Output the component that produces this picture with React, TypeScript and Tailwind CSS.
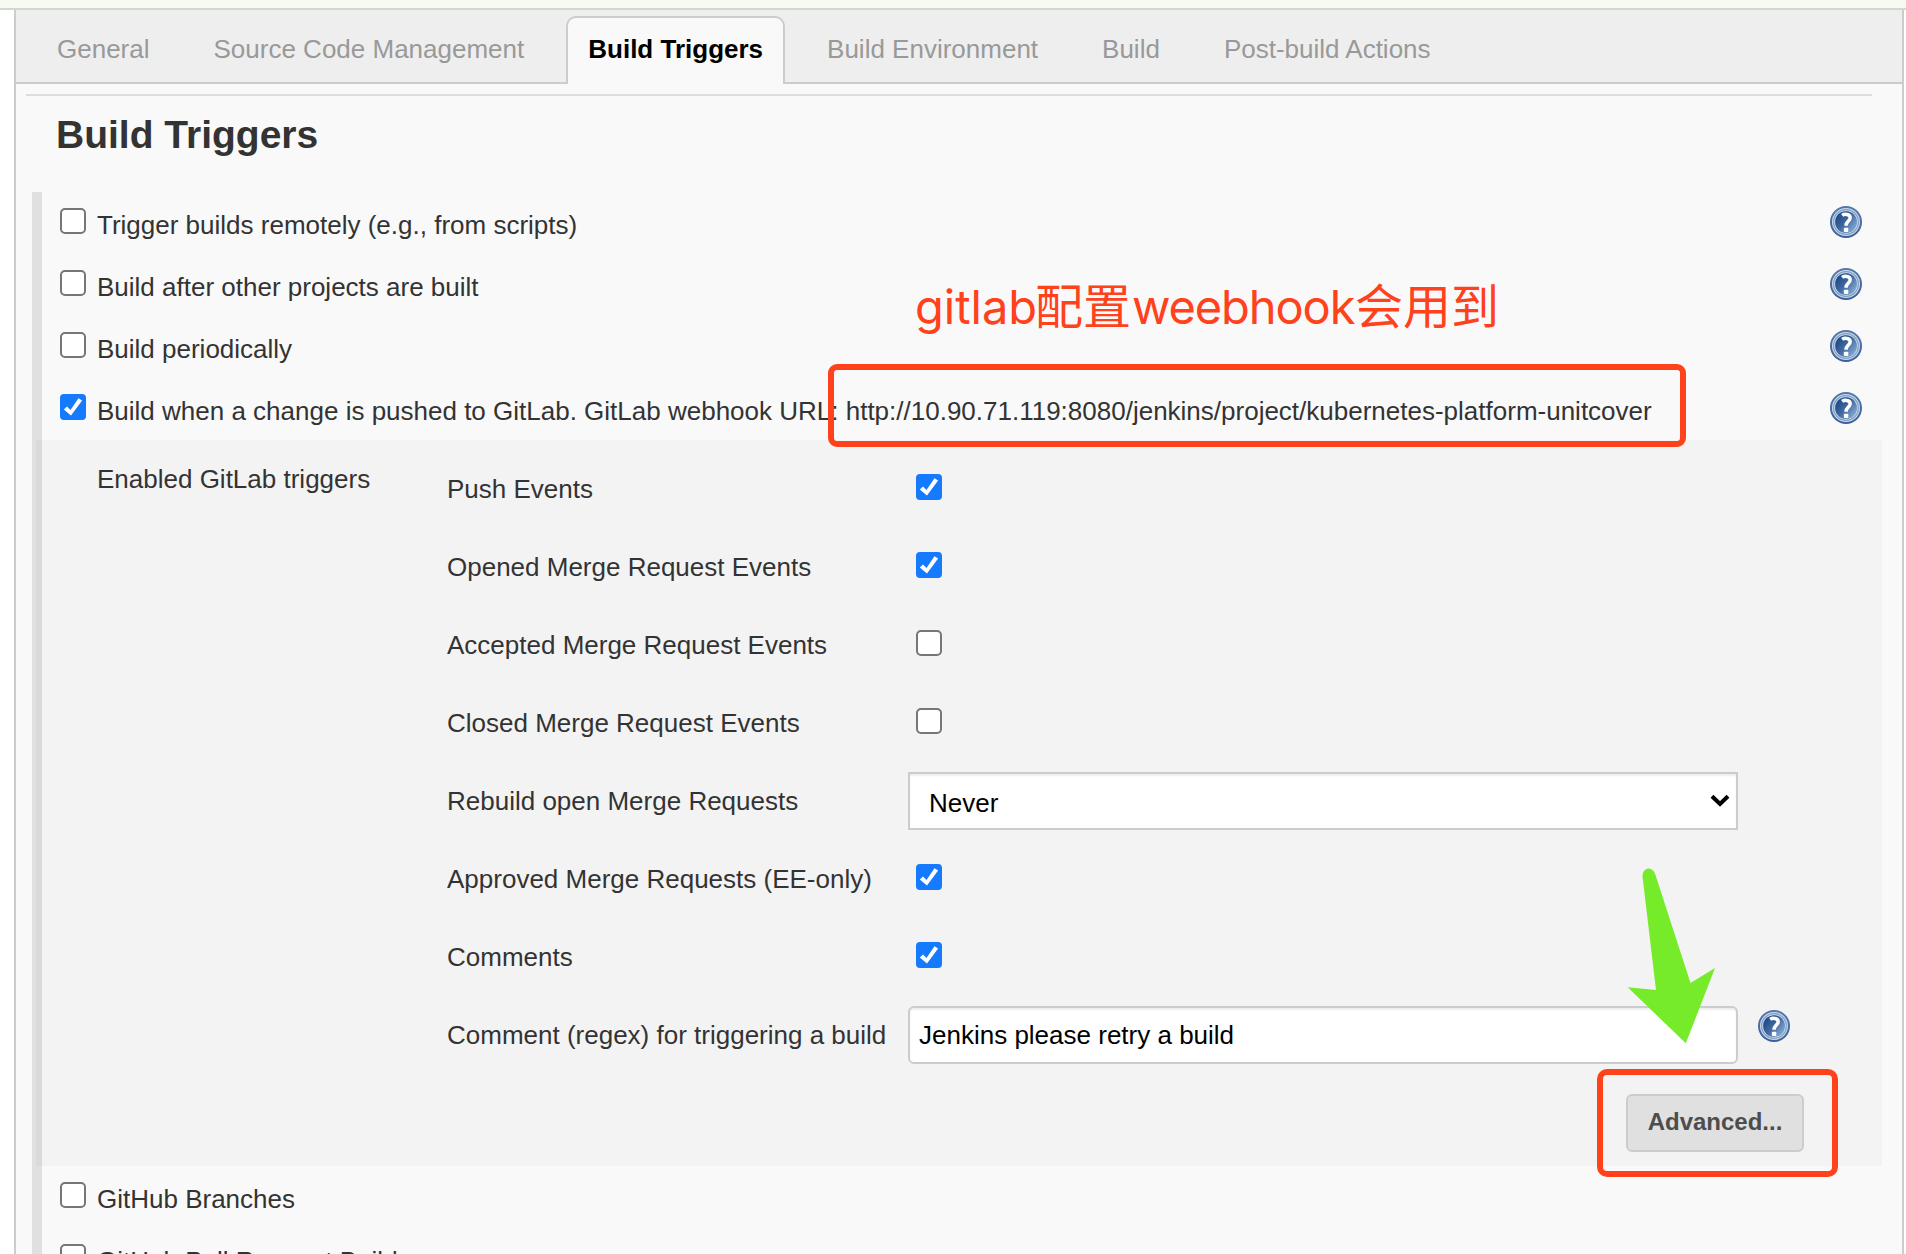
import React from "react";

const tabs = [
  { label: "General" },
  { label: "Source Code Management" },
  { label: "Build Triggers", active: true },
  { label: "Build Environment" },
  { label: "Build" },
  { label: "Post-build Actions" },
];

const triggers = [
  { label: "Trigger builds remotely (e.g., from scripts)", checked: false },
  { label: "Build after other projects are built", checked: false },
  { label: "Build periodically", checked: false },
  {
    label:
      "Build when a change is pushed to GitLab. GitLab webhook URL: http://10.90.71.119:8080/jenkins/project/kubernetes-platform-unitcover",
    checked: true,
  },
];

type Field = { label: string; kind: "check" | "select" | "input"; checked?: boolean; value?: string };

const fields: Field[] = [
  { label: "Push Events", kind: "check", checked: true },
  { label: "Opened Merge Request Events", kind: "check", checked: true },
  { label: "Accepted Merge Request Events", kind: "check", checked: false },
  { label: "Closed Merge Request Events", kind: "check", checked: false },
  { label: "Rebuild open Merge Requests", kind: "select", value: "Never" },
  { label: "Approved Merge Requests (EE-only)", kind: "check", checked: true },
  { label: "Comments", kind: "check", checked: true },
  { label: "Comment (regex) for triggering a build", kind: "input", value: "Jenkins please retry a build" },
];

function Checkbox({ checked }: { checked?: boolean }) {
  if (!checked) {
    return <span className="block size-[26px] shrink-0 rounded-[5px] border-2 border-[#767676] bg-white" />;
  }
  return (
    <span className="block size-[26px] shrink-0 rounded-[4px] bg-[#167aff]">
      <svg viewBox="0 0 26 26" className="block size-full">
        <path d="M3.8 15.6 7 12.4 10.5 16 18.5 4.2 22.1 6.6 11 21.4Z" fill="#fff" />
      </svg>
    </span>
  );
}

function HelpIcon() {
  return (
    <svg viewBox="0 0 32 32" className="block size-8 shrink-0">
      <defs>
        <linearGradient id="helpFill" x1="0.1" y1="0.2" x2="0.9" y2="0.85">
          <stop offset="0" stopColor="#204a87" />
          <stop offset="0.45" stopColor="#3f689f" />
          <stop offset="1" stopColor="#83a8d2" />
        </linearGradient>
        <linearGradient id="helpRing" x1="0" y1="0" x2="0" y2="1">
          <stop offset="0" stopColor="#5379ad" />
          <stop offset="1" stopColor="#3a6099" />
        </linearGradient>
      </defs>
      <circle cx="16" cy="16" r="16" fill="url(#helpRing)" />
      <circle cx="16" cy="16" r="12.4" fill="#7f9cc4" stroke="#ccd9e8" strokeWidth="3.2" />
      <circle cx="16" cy="16" r="12.4" fill="none" stroke="#7f9dc5" strokeWidth="1.2" />
      <circle cx="16" cy="16" r="10.8" fill="url(#helpFill)" />
      <path
        d="M12.1 9.4C14 8 20 7.4 20.2 11.7C20.4 15 16 15.3 16 19.8"
        fill="none"
        stroke="#fff"
        strokeWidth="3.5"
      />
      <rect x="13.9" y="21.8" width="4.4" height="4.2" rx="0.8" fill="#fff" />
    </svg>
  );
}

function TriggerRow({ label, checked, help }: { label: string; checked: boolean; help?: boolean }) {
  return (
    <div className="flex h-[62px] shrink-0 items-start pl-[18px] pr-5">
      <div className="pt-4">
        <Checkbox checked={checked} />
      </div>
      <div className="flex-1 whitespace-nowrap pl-[11px] pt-[18px] leading-[30px]">{label}</div>
      {help && (
        <div className="pt-[14px]">
          <HelpIcon />
        </div>
      )}
    </div>
  );
}

function FieldControl({ field }: { field: Field }) {
  if (field.kind === "check") {
    return (
      <div className="pl-2 pt-6">
        <Checkbox checked={field.checked} />
      </div>
    );
  }
  if (field.kind === "select") {
    return (
      <div className="pt-[10px]">
        <div className="flex h-[58px] w-[830px] items-start justify-between border-2 border-[#ccc] bg-white pl-[19px] pr-[6px] pt-[14px] leading-[30px] text-black shadow-[inset_0_2px_2px_rgba(0,0,0,0.07)]">
          <span>{field.value}</span>
          <svg viewBox="0 0 20 14" className="mt-[6px] h-[14px] w-5">
            <path d="M2 2.2 10 10 18 2.2" fill="none" stroke="#000" strokeWidth="4" />
          </svg>
        </div>
      </div>
    );
  }
  return (
    <div className="flex items-start pt-[10px]">
      <div className="h-[58px] w-[830px] rounded-[6px] border-2 border-[#ccc] bg-white pl-[9px] pt-3 leading-[30px] text-black shadow-[inset_0_2px_2px_rgba(0,0,0,0.07)]">
        {field.value}
      </div>
      <div className="pl-5 pt-1">
        <HelpIcon />
      </div>
    </div>
  );
}

export default function App() {
  return (
    <div className="relative flex h-[1254px] w-[1906px] flex-col overflow-hidden bg-white font-['Liberation_Sans',Arial,sans-serif] text-[26px] text-[#333]">
      <div className="h-[10px] shrink-0 border-b-2 border-[#d3d7cf] bg-[#f6faf2]" />

      <main className="ml-[14px] mr-[2px] flex min-h-0 flex-1 flex-col overflow-hidden border-x-2 border-[#ccc] bg-[#f9f9f9]">
        <nav className="flex h-[74px] shrink-0 gap-5 border-b-2 border-[#ccc] bg-[#eee] pl-[19px] pt-[6px]">
          {tabs.map((t) =>
            t.active ? (
              <div
                key={t.label}
                className="h-[68px] whitespace-nowrap rounded-t-[10px] border-2 border-b-0 border-[#ccc] bg-[#f9f9f9] px-5 pt-4 font-bold leading-[30px] text-black"
              >
                {t.label}
              </div>
            ) : (
              <div key={t.label} className="whitespace-nowrap px-[22px] pt-[18px] leading-[30px] text-[#999]">
                {t.label}
              </div>
            ),
          )}
        </nav>

        <hr className="ml-[10px] mr-[30px] mt-[10px] h-[2px] shrink-0 border-0 bg-[#ddd]" />
        <h1 className="mt-[17px] h-[79px] shrink-0 pl-10 text-[39px] font-bold leading-[44px]">Build Triggers</h1>

        <section className="ml-4 mr-5 flex flex-col border-l-[10px] border-[#e0e0e0]">
          {triggers.map((t) => (
            <TriggerRow key={t.label} label={t.label} checked={t.checked} help />
          ))}

          <div className="-ml-[6px] h-[726px] shrink-0 bg-black/[0.024] pl-[61px] pt-[10px]">
            <div className="flex">
              <div className="w-[350px] shrink-0 pt-[14px] leading-[30px]">Enabled GitLab triggers</div>
              <div>
                {fields.map((f) => (
                  <div key={f.label} className="flex h-[78px]">
                    <div className="w-[461px] shrink-0 whitespace-nowrap pt-6 leading-[30px]">{f.label}</div>
                    <FieldControl field={f} />
                  </div>
                ))}
              </div>
            </div>
            <div className="flex justify-end pr-[78px] pt-5">
              <button className="h-[58px] w-[178px] rounded-[6px] border-2 border-[#ccc] bg-[#e0e0e0] pb-[3px] text-[24px] font-bold leading-[28px] text-[#4d4d4d]">
                Advanced...
              </button>
            </div>
          </div>

          <TriggerRow label="GitHub Branches" checked={false} />
          <TriggerRow label="GitHub Pull Request Builder" checked={false} />
        </section>
      </main>

      {/* Annotations drawn over the page */}
      <div className="absolute left-[915px] top-[271px] flex items-baseline whitespace-nowrap font-[Inter,'Noto_Sans_CJK_SC',sans-serif] text-[48px] leading-[64px] text-[#ff411c]">
        <span className="w-[120px] text-[47px] font-[370]">gitlab</span>
        <span className="w-[97px] font-['Noto_Sans_CJK_SC',sans-serif] font-normal">配置</span>
        <span className="w-[223px] text-[47px] font-[370] tracking-[-1.1px]">weebhook</span>
        <span className="font-['Noto_Sans_CJK_SC',sans-serif] font-normal">会用到</span>
      </div>
      <div className="absolute left-[828px] top-[364px] h-[83px] w-[858px] rounded-[9px] border-[6px] border-[#ff411c]" />
      <div className="absolute left-[1597px] top-[1069px] h-[108px] w-[241px] rounded-[10px] border-[6px] border-[#ff411c]" />
      <svg viewBox="0 0 90 178" className="absolute left-[1627px] top-[867px] h-[178px] w-[90px]">
        <path
          d="M15.5 9.5C15.4 5 18 1.6 21.4 1.5C25 1.7 27.5 4.2 28.5 8L63.5 116 88 101 58.8 176.3 .7 120.2 29 123Z"
          fill="#75eb29"
        />
      </svg>
    </div>
  );
}
